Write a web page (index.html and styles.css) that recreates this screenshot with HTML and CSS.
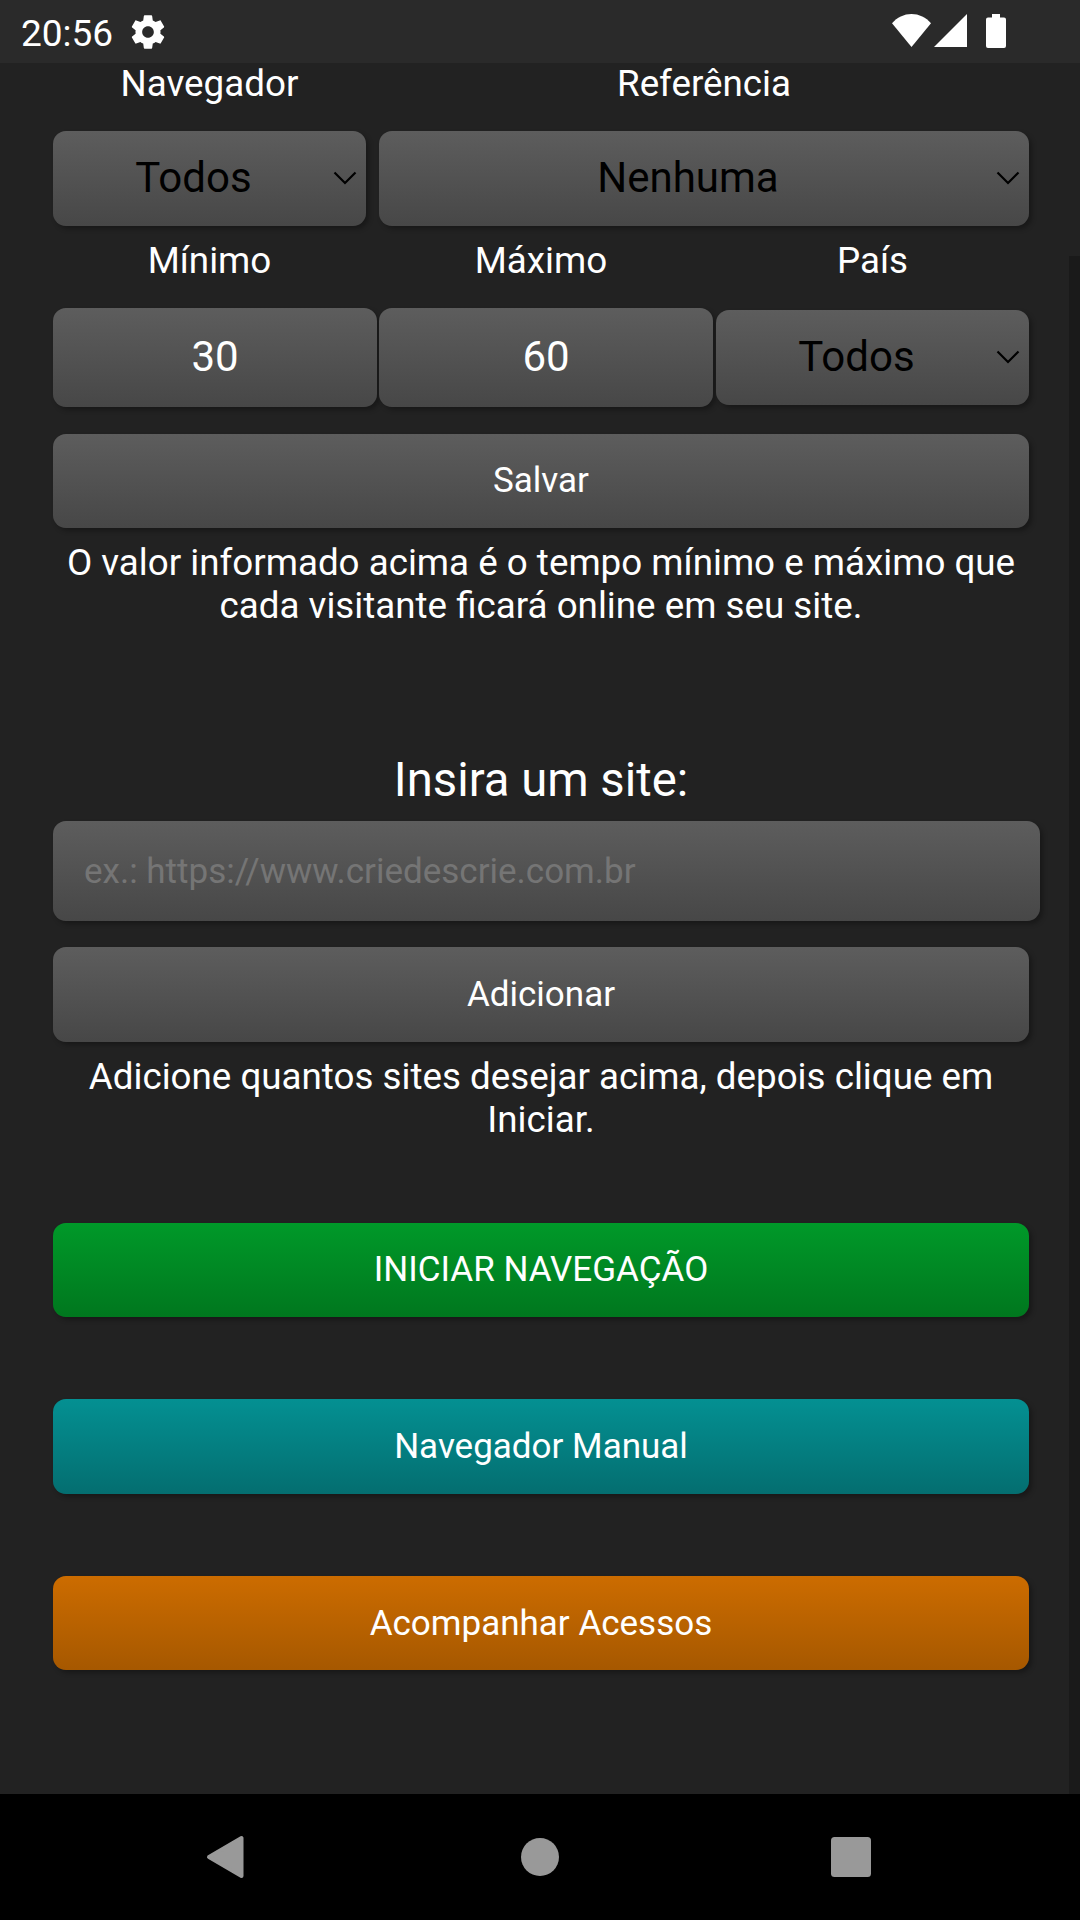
FILE: index.html
```html
<!DOCTYPE html>
<html lang="pt-BR">
<head>
<meta charset="utf-8">
<title>Navegador</title>
<link rel="stylesheet" href="styles.css">
</head>
<body>
<header class="status-bar">
  <span class="clock">20:56</span>
  <svg class="gear" width="40" height="40" viewBox="0 0 24 24"><path fill="#fff" d="M19.43 12.98c.04-.32.07-.64.07-.98s-.03-.66-.07-.98l2.11-1.65c.19-.15.24-.42.12-.64l-2-3.46c-.12-.22-.39-.3-.61-.22l-2.49 1c-.52-.4-1.08-.73-1.69-.98l-.38-2.65C14.46 2.18 14.25 2 14 2h-4c-.25 0-.46.18-.49.42l-.38 2.65c-.61.25-1.17.59-1.69.98l-2.49-1c-.23-.09-.49 0-.61.22l-2 3.46c-.13.22-.07.49.12.64l2.11 1.65c-.04.32-.07.65-.07.98s.03.66.07.98l-2.11 1.65c-.19.15-.24.42-.12.64l2 3.46c.12.22.39.3.61.22l2.49-1c.52.4 1.08.73 1.69.98l.38 2.65c.03.24.24.42.49.42h4c.25 0 .46-.18.49-.42l.38-2.65c.61-.25 1.17-.59 1.69-.98l2.49 1c.23.09.49 0 .61-.22l2-3.46c.12-.22.07-.49-.12-.64l-2.11-1.65zM12 15.5c-1.93 0-3.5-1.57-3.5-3.5s1.57-3.5 3.5-3.5 3.5 1.57 3.5 3.5-1.57 3.5-3.5 3.5z"/></svg>
  <div class="indicators">
    <svg width="39" height="33" viewBox="0 0 39 33"><path fill="#fff" d="M0 9.2C5 3.4 12 0 19.500 0S34 3.400 39 9.200L19.500 33z"/></svg>
    <svg width="33" height="33" viewBox="0 0 33 33"><path fill="#fff" d="M0 33L33 0V33z"/></svg>
    <svg class="battery" width="20" height="34" viewBox="0 0 20 34"><path fill="#fff" d="M6 0h8v3.400h4q2 0 2 2V32q0 2-2 2H2q-2 0-2-2V5.400q0-2 2-2h4z"/></svg>
  </div>
</header>

<main class="page">
  <div class="fields">
    <label class="field">
      <span class="label">Navegador</span>
      <span class="control select"><span class="value">Todos</span><svg class="chevron" width="24" height="14" viewBox="0 0 24 14"><path d="M1.500 1.500L12 12L22.500 1.500"/></svg></span>
    </label>
    <label class="field wide">
      <span class="label">Referência</span>
      <span class="control select"><span class="value">Nenhuma</span><svg class="chevron" width="24" height="14" viewBox="0 0 24 14"><path d="M1.500 1.500L12 12L22.500 1.500"/></svg></span>
    </label>
    <label class="field">
      <span class="label">Mínimo</span>
      <input class="control input number" type="text" value="30">
    </label>
    <label class="field">
      <span class="label">Máximo</span>
      <input class="control input number" type="text" value="60">
    </label>
    <label class="field">
      <span class="label">País</span>
      <span class="control select short"><span class="value">Todos</span><svg class="chevron" width="24" height="14" viewBox="0 0 24 14"><path d="M1.500 1.500L12 12L22.500 1.500"/></svg></span>
    </label>
  </div>
  <button class="control button save">Salvar</button>
  <p class="note">O valor informado acima é o tempo mínimo e máximo que cada visitante ficará online em seu site.</p>

  <h1 class="title">Insira um site:</h1>
  <input class="control input url" type="text" placeholder="ex.: https://www.criedescrie.com.br">
  <button class="control button add">Adicionar</button>
  <p class="note">Adicione quantos sites desejar acima, depois clique em Iniciar.</p>

  <div class="actions">
    <button class="control button green">INICIAR NAVEGAÇÃO</button>
    <button class="control button teal">Navegador Manual</button>
    <button class="control button orange">Acompanhar Acessos</button>
  </div>
  <div class="scrollbar"></div>
</main>

<nav class="nav-bar">
  <svg width="40" height="44" viewBox="0 0 40 44"><path fill="#999" stroke="#999" stroke-width="4" stroke-linejoin="round" d="M4 22L36.500 3V41z"/></svg>
  <svg class="home" width="40" height="40" viewBox="0 0 40 40"><circle cx="20" cy="20" r="19" fill="#999"/></svg>
  <svg width="40" height="40" viewBox="0 0 40 40"><rect width="40" height="40" rx="3.500" fill="#999"/></svg>
</nav>
</body>
</html>
```
FILE: styles.css
```css
* {
  box-sizing: border-box;
}

body {
  margin: 0;
  width: 1080px;
  height: 1920px;
  display: flex;
  flex-direction: column;
  overflow: hidden;
  background: #222;
  color: #fff;
  font-family: Roboto, sans-serif;
  font-size: 36.75px;
  line-height: 43px;
}

.status-bar {
  flex: none;
  height: 63px;
  padding: 0 74px 0 21px;
  display: flex;
  align-items: center;
  background: #2a2a2a;
}

.clock {
  width: 92px;
  font-size: 37px;
  padding-top: 4px;
}

.gear {
  margin-left: 15px;
}

.indicators {
  align-self: flex-start;
  margin: 14px 0 0 auto;
  display: flex;
  gap: 3px;
}

.battery {
  margin-left: 16px;
}

.page {
  position: relative;
  flex: 1;
  min-height: 0;
  padding: 0 51px 0 53px;
  display: flex;
  flex-direction: column;
  overflow: hidden;
}

.fields {
  display: grid;
  grid-template-columns: 313px 324px 313px;
  column-gap: 13px;
  row-gap: 13px;
  margin-top: -1px;
}

.field {
  display: flex;
  flex-direction: column;
}

.wide {
  grid-column: span 2;
}

.label {
  text-align: center;
  margin-bottom: 26px;
}

.control {
  flex: none;
  display: block;
  border: 0;
  border-radius: 13px;
  background: linear-gradient(#5d5d5d, #474747);
  box-shadow: 3px 3px 5px rgba(0, 0, 0, 0.3);
  color: #fff;
  font-family: inherit;
}

.select {
  display: flex;
  align-items: center;
  height: 95px;
  padding: 0 9px 2px 1px;
  color: #000;
  font-size: 42px;
  line-height: 49px;
  text-align: center;
}

.short {
  margin-top: 2px;
}

.value {
  flex: 1;
}

.chevron {
  fill: none;
  stroke: #000;
  stroke-width: 2.2;
}

.input {
  margin-right: -11px;
  padding: 0;
}

.number {
  height: 99px;
  margin-right: -11px;
  padding-bottom: 2px;
  font-size: 42px;
  text-align: center;
}

.field:nth-child(4) .number {
  margin-right: -10px;
}

.button {
  height: 95px;
  padding: 0;
  font-size: 35px;
}

.save {
  height: 94px;
  margin-top: 27px;
  padding-bottom: 2px;
}

.note {
  margin: 13px 0 0;
  text-align: center;
}

.title {
  margin: 125px 0 12px;
  font-size: 47.25px;
  font-weight: 400;
  line-height: 57px;
  text-align: center;
}

.url {
  height: 100px;
  padding: 0 31px;
  font-size: 35px;
}

.url::placeholder {
  color: #757575;
}

.add {
  margin-top: 26px;
}

.actions {
  margin-top: 82px;
  display: flex;
  flex-direction: column;
  gap: 82px;
}

.green {
  height: 94px;
  padding-bottom: 2px;
  background: linear-gradient(#009929, #00771e);
}

.teal {
  background: linear-gradient(#049092, #046e70);
}

.orange {
  height: 94px;
  background: linear-gradient(#cc6c00, #a65800);
}

.scrollbar {
  position: absolute;
  top: 193px;
  right: 0;
  bottom: 0;
  width: 11px;
  background: #1a1a1a;
}

.nav-bar {
  flex: none;
  height: 126px;
  padding: 0 209px 0 205px;
  display: flex;
  align-items: center;
  justify-content: space-between;
  background: #000;
}

.home {
  margin-left: 4px;
}
```
